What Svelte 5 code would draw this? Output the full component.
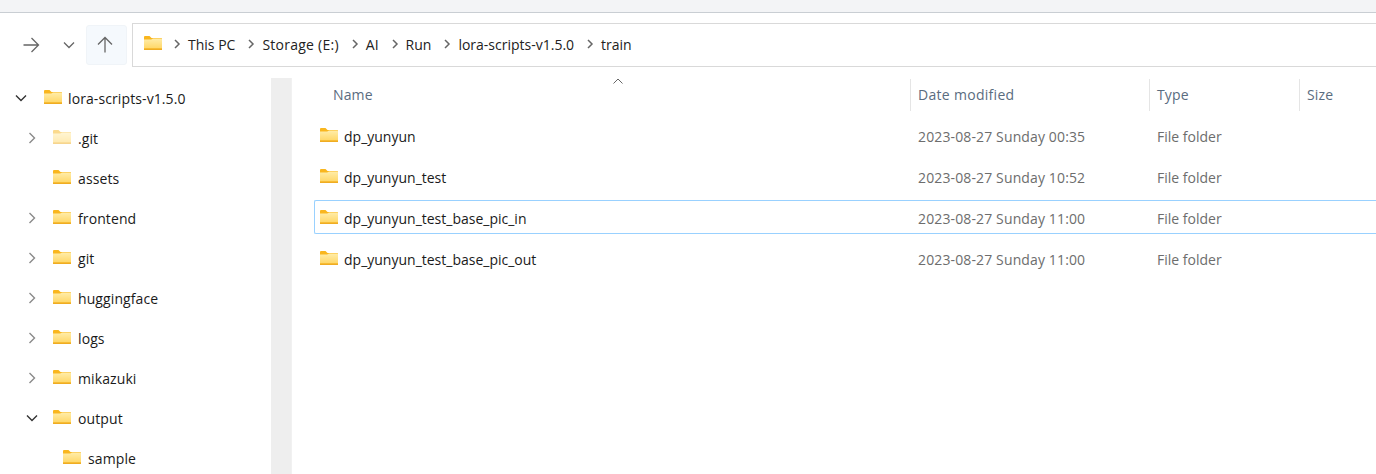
<script>
  const crumbs = ['This PC', 'Storage (E:)', 'AI', 'Run', 'lora-scripts-v1.5.0', 'train'];

  const tree = [
    { name: 'lora-scripts-v1.5.0', depth: 0, arrow: 'open' },
    { name: '.git', depth: 1, arrow: 'closed', hidden: true },
    { name: 'assets', depth: 1 },
    { name: 'frontend', depth: 1, arrow: 'closed' },
    { name: 'git', depth: 1, arrow: 'closed' },
    { name: 'huggingface', depth: 1, arrow: 'closed' },
    { name: 'logs', depth: 1, arrow: 'closed' },
    { name: 'mikazuki', depth: 1, arrow: 'closed' },
    { name: 'output', depth: 1, arrow: 'open' },
    { name: 'sample', depth: 2 }
  ];

  const files = [
    { name: 'dp_yunyun', date: '2023-08-27 Sunday 00:35' },
    { name: 'dp_yunyun_test', date: '2023-08-27 Sunday 10:52' },
    { name: 'dp_yunyun_test_base_pic_in', date: '2023-08-27 Sunday 11:00', focused: true },
    { name: 'dp_yunyun_test_base_pic_out', date: '2023-08-27 Sunday 11:00' }
  ];
</script>

{#snippet folder(faded = false)}
  <svg class="folder" class:faded width="18" height="14" viewBox="0 0 18 14">
    <defs>
      <linearGradient id="folder-body" x1="0" y1="0" x2="0" y2="1">
        <stop offset="0" stop-color="#ffedaa" />
        <stop offset="1" stop-color="#ffd767" />
      </linearGradient>
    </defs>
    <path d="M0 1a1 1 0 0 1 1-1h4.5l2 2H17a1 1 0 0 1 1 1v10a1 1 0 0 1-1 1H1a1 1 0 0 1-1-1z" fill="#f9b61e" />
    <path d="M0 3.6h7.2L9 2.4h8a1 1 0 0 1 1 1V12.6H0z" fill="url(#folder-body)" />
    <rect x="0" y="12.6" width="18" height="1.4" fill="#efac22" />
  </svg>
{/snippet}

<div class="window">
  <div class="titlebar"></div>

  <div class="toolbar">
    <button class="nav forward" aria-label="Forward">
      <svg width="18" height="18" viewBox="0 0 18 18"><path d="M1.5 9h15M9.5 2l7 7-7 7" /></svg>
    </button>
    <button class="nav recent" aria-label="Recent">
      <svg width="14" height="14" viewBox="0 0 14 14"><path d="M2 4.5 7 9.5l5-5" /></svg>
    </button>
    <button class="nav up" aria-label="Up">
      <svg width="18" height="18" viewBox="0 0 18 18"><path d="M9 16.5v-15M2 8.5l7-7 7 7" /></svg>
    </button>
    <div class="address">
      {@render folder()}
      {#each crumbs as crumb}
        <svg class="sep" width="8" height="10" viewBox="0 0 8 10"><path d="M2 1l4 4-4 4" /></svg>
        <span class="crumb" class:wide={crumb.startsWith('Storage')}>{crumb}</span>
      {/each}
    </div>
  </div>

  <div class="main">
    <nav class="tree">
      {#each tree as item}
        <div class="tree-row depth-{item.depth}">
          <span class="arrow">
            {#if item.arrow === 'open'}
              <svg class="open" width="12" height="12" viewBox="0 0 12 12"><path d="M1 3.5 6 8.5l5-5" /></svg>
            {:else if item.arrow === 'closed'}
              <svg class="closed" width="12" height="12" viewBox="0 0 12 12"><path d="M3.5 1l5 5-5 5" /></svg>
            {/if}
          </span>
          {@render folder(item.hidden)}
          <span class="tree-name">{item.name}</span>
        </div>
      {/each}
    </nav>
    <div class="scrolltrack"></div>

    <section class="list">
      <div class="head">
        <svg class="sort" width="10" height="6" viewBox="0 0 10 6"><path d="M.5 5.5 5 1l4.5 4.5" /></svg>
        <div class="col name"><span>Name</span></div>
        <div class="col date"><span>Date modified</span></div>
        <div class="col type"><span>Type</span></div>
        <div class="col size"><span>Size</span></div>
      </div>
      {#each files as file}
        <div class="row" class:focused={file.focused}>
          <div class="cell name">
            {@render folder()}
            <span class="file-name">{file.name}</span>
          </div>
          <div class="cell date">{file.date}</div>
          <div class="cell type">File folder</div>
        </div>
      {/each}
    </section>
  </div>
</div>

<style>
  :global(body) {
    background: #fff;
  }

  .window {
    width: 1376px;
    height: 474px;
    overflow: hidden;
    display: flex;
    flex-direction: column;
    font-family: 'Open Sans', 'Noto Sans', sans-serif;
    font-size: 14px;
    color: #1a1a1a;
    background: #fff;
  }

  .titlebar {
    height: 12px;
    flex: none;
    background: #f3f4f6;
    border-bottom: 1px solid #c9ced3;
  }

  .toolbar {
    height: 65px;
    flex: none;
    box-sizing: border-box;
    padding: 10px 0 11px;
    display: flex;
    align-items: stretch;
  }

  .nav {
    border: 0;
    padding: 0;
    background: none;
    display: flex;
    align-items: center;
    justify-content: center;
  }

  .nav svg {
    fill: none;
    stroke: #666;
    stroke-width: 1.3;
  }

  .forward {
    width: 18px;
    margin-left: 22px;
  }

  .recent {
    width: 14px;
    margin-left: 22px;
  }

  .up {
    width: 41px;
    height: 40px;
    margin: 2px 0 0 10px;
    padding-right: 3px;
    background: #f5f9fd;
    border: 1px solid #f0f4f8;
    border-radius: 3px;
    box-sizing: border-box;
  }

  .address {
    flex: 1;
    margin-left: 5px;
    border: 1px solid #d9d9d9;
    border-right: 0;
    box-sizing: border-box;
    height: 44px;
    padding: 0 0 2px 11px;
    display: flex;
    align-items: center;
  }

  .sep {
    margin: 0 7px 0 11px;
    fill: none;
    stroke: #666;
    stroke-width: 1.5;
  }

  .crumb {
    color: #222;
    margin-right: 1px;
  }

  .crumb.wide {
    letter-spacing: 0.25px;
  }

  .main {
    flex: 1;
    min-height: 0;
    display: flex;
  }

  .tree {
    width: 271px;
    flex: none;
  }

  .tree-row {
    height: 40px;
    display: flex;
    align-items: center;
  }

  .depth-0 {
    padding-left: 15px;
  }

  .depth-1 {
    padding-left: 26px;
  }

  .depth-2 {
    padding-left: 36px;
  }

  .arrow {
    width: 12px;
    height: 12px;
    margin-right: 15px;
    display: flex;
  }

  .depth-0 .arrow {
    margin-right: 17px;
  }

  .arrow svg {
    fill: none;
    stroke-width: 1.4;
  }

  .arrow .open {
    stroke: #333;
  }

  .arrow .closed {
    stroke: #8a8a8a;
  }

  .folder {
    flex: none;
    display: block;
    margin-top: -3px;
  }

  .folder.faded {
    opacity: 0.5;
  }

  .tree-name {
    margin-left: 7px;
    color: #1a1a1a;
    letter-spacing: 0.1px;
  }

  .depth-0 .tree-name {
    margin-left: 6px;
  }

  .scrolltrack {
    width: 20px;
    flex: none;
    background: #eee;
    border-right: 1px solid #f1f1f1;
  }

  .list {
    flex: 1;
    min-width: 0;
    position: relative;
  }

  .sort {
    position: absolute;
    left: 321px;
    top: 0;
    fill: none;
    stroke: #666;
    stroke-width: 1;
  }

  .head {
    height: 32px;
    margin-top: 1px;
    display: flex;
    color: #5a6c80;
    letter-spacing: 0.15px;
  }

  .col {
    box-sizing: border-box;
    display: flex;
    align-items: center;
    border-left: 1px solid #e5e5e5;
    padding-left: 7px;
  }

  .col span {
    margin-top: -2px;
  }

  .col.name {
    width: 618px;
    padding-left: 41px;
    border-left: 0;
  }

  .col.date {
    width: 239px;
    letter-spacing: 0.3px;
  }

  .col.type {
    width: 150px;
  }

  .col.size {
    flex: 1;
  }

  .row {
    height: 34px;
    margin: 7px 0 7px 22px;
    padding-top: 2px;
    display: flex;
    align-items: center;
    box-sizing: border-box;
    border: 1px solid transparent;
    border-right: 0;
    border-radius: 2px 0 0 2px;
  }

  .row.focused {
    border-color: #99d1ff;
  }

  .cell.name {
    width: 596px;
    flex: none;
    display: flex;
    align-items: center;
    padding-left: 5px;
    box-sizing: border-box;
  }

  .file-name {
    margin-left: 6px;
  }

  .cell.date {
    width: 239px;
    flex: none;
    padding-left: 7px;
    box-sizing: border-box;
    color: #6d6d6d;
    letter-spacing: 0.13px;
  }

  .cell.type {
    padding-left: 7px;
    color: #6d6d6d;
  }
</style>
